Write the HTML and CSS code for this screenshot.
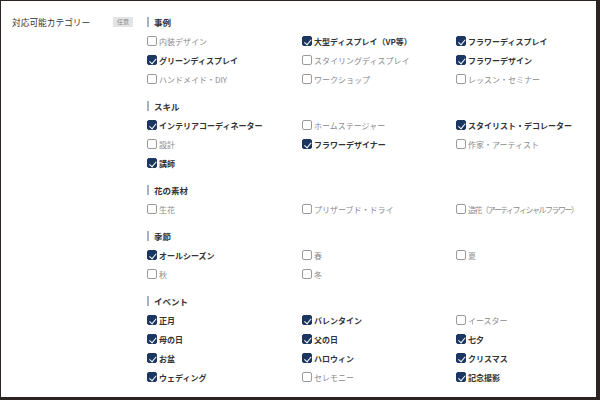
FILE: index.html
```html
<!DOCTYPE html>
<html lang="ja">
<head>
  <meta charset="UTF-8" />
  <title>対応可能カテゴリー</title>
  <link rel="stylesheet" href="styles.css">
</head>
<body>
  <div class="frame">
    <div class="field-head">
      <span class="field-label">対応可能カテゴリー</span>
      <span class="badge">任意</span>
    </div>

    <div class="field-body">
      <div class="section">
        <h3 class="section-title">事例</h3>
        <div class="items">
          <label class="item"><span class="box"></span>内装デザイン</label>
          <label class="item on"><span class="box"></span>大型ディスプレイ（VP等）</label>
          <label class="item on"><span class="box"></span>フラワーディスプレイ</label>
          <label class="item on"><span class="box"></span>グリーンディスプレイ</label>
          <label class="item"><span class="box"></span>スタイリングディスプレイ</label>
          <label class="item on"><span class="box"></span>フラワーデザイン</label>
          <label class="item"><span class="box"></span>ハンドメイド・DIY</label>
          <label class="item"><span class="box"></span>ワークショップ</label>
          <label class="item"><span class="box"></span>レッスン・セミナー</label>
        </div>
      </div>

      <div class="section">
        <h3 class="section-title">スキル</h3>
        <div class="items">
          <label class="item on"><span class="box"></span>インテリアコーディネーター</label>
          <label class="item"><span class="box"></span>ホームステージャー</label>
          <label class="item on"><span class="box"></span>スタイリスト・デコレーター</label>
          <label class="item"><span class="box"></span>設計</label>
          <label class="item on"><span class="box"></span>フラワーデザイナー</label>
          <label class="item"><span class="box"></span>作家・アーティスト</label>
          <label class="item on"><span class="box"></span>講師</label>
        </div>
      </div>

      <div class="section">
        <h3 class="section-title">花の素材</h3>
        <div class="items">
          <label class="item"><span class="box"></span>生花</label>
          <label class="item"><span class="box"></span>プリザーブド・ドライ</label>
          <label class="item narrow"><span class="box"></span>造花（アーティフィシャルフラワー）</label>
        </div>
      </div>

      <div class="section">
        <h3 class="section-title">季節</h3>
        <div class="items">
          <label class="item on"><span class="box"></span>オールシーズン</label>
          <label class="item"><span class="box"></span>春</label>
          <label class="item"><span class="box"></span>夏</label>
          <label class="item"><span class="box"></span>秋</label>
          <label class="item"><span class="box"></span>冬</label>
        </div>
      </div>

      <div class="section">
        <h3 class="section-title">イベント</h3>
        <div class="items">
          <label class="item on"><span class="box"></span>正月</label>
          <label class="item on"><span class="box"></span>バレンタイン</label>
          <label class="item"><span class="box"></span>イースター</label>
          <label class="item on"><span class="box"></span>母の日</label>
          <label class="item on"><span class="box"></span>父の日</label>
          <label class="item on"><span class="box"></span>七夕</label>
          <label class="item on"><span class="box"></span>お盆</label>
          <label class="item on"><span class="box"></span>ハロウィン</label>
          <label class="item on"><span class="box"></span>クリスマス</label>
          <label class="item on"><span class="box"></span>ウェディング</label>
          <label class="item"><span class="box"></span>セレモニー</label>
          <label class="item on"><span class="box"></span>記念撮影</label>
        </div>
      </div>
    </div>
  </div>
</body>
</html>
```

FILE: styles.css
```css
* { margin: 0; padding: 0; box-sizing: border-box; }
body {
  background: #fff;
  font-family: "Noto Sans CJK JP", "Noto Sans", sans-serif;
  color: #333;
}
.frame {
  width: 600px;
  height: 400px;
  overflow: hidden;
  border-style: solid;
  border-color: #2b2420;
  border-width: 1px 4px 3px 1px;
  display: flex;
  padding: 11.5px 0 0 11px;
}

/* left label */
.field-head {
  display: flex;
  align-items: flex-start;
  width: 135px;
}
.field-label {
  width: 101px;
  font-size: 8.7px;
  line-height: 19px;
  color: #333;
}
.badge {
  margin-top: 4.5px;
  width: 20px;
  height: 10px;
  background: #e4e4e4;
  color: #888;
  font-size: 6px;
  line-height: 10px;
  text-align: center;
}

/* sections */
.field-body {
  flex: 1;
}
.section {
  margin-bottom: 8px;
}
.section-title {
  display: flex;
  align-items: center;
  height: 19px;
  font-size: 8.5px;
  font-weight: bold;
  color: #333;
}
.section-title::before {
  content: "";
  width: 2px;
  height: 10px;
  background: #a3b3c5;
  margin-right: 5px;
}
.items {
  display: grid;
  grid-template-columns: 155px 154px 1fr;
  grid-auto-rows: 19px;
}
.item {
  display: flex;
  align-items: center;
  gap: 2px;
  font-size: 8px;
  color: #8a8a8a;
  white-space: nowrap;
}
.item.on {
  color: #333;
  font-weight: bold;
}
.item.narrow {
  letter-spacing: -1.5px;
}
.box {
  position: relative;
  width: 10px;
  height: 10px;
  border: 1px solid #9a9a9a;
  border-radius: 2px;
  background: #fff;
  flex-shrink: 0;
}
.item.on .box {
  background: #1b3661;
  border-color: #1b3661;
}
.item.on .box::after {
  content: "";
  position: absolute;
  left: 2.5px;
  top: 0.5px;
  width: 3px;
  height: 5.5px;
  border: solid #fff;
  border-width: 0 1.6px 1.6px 0;
  transform: rotate(40deg);
}
```
